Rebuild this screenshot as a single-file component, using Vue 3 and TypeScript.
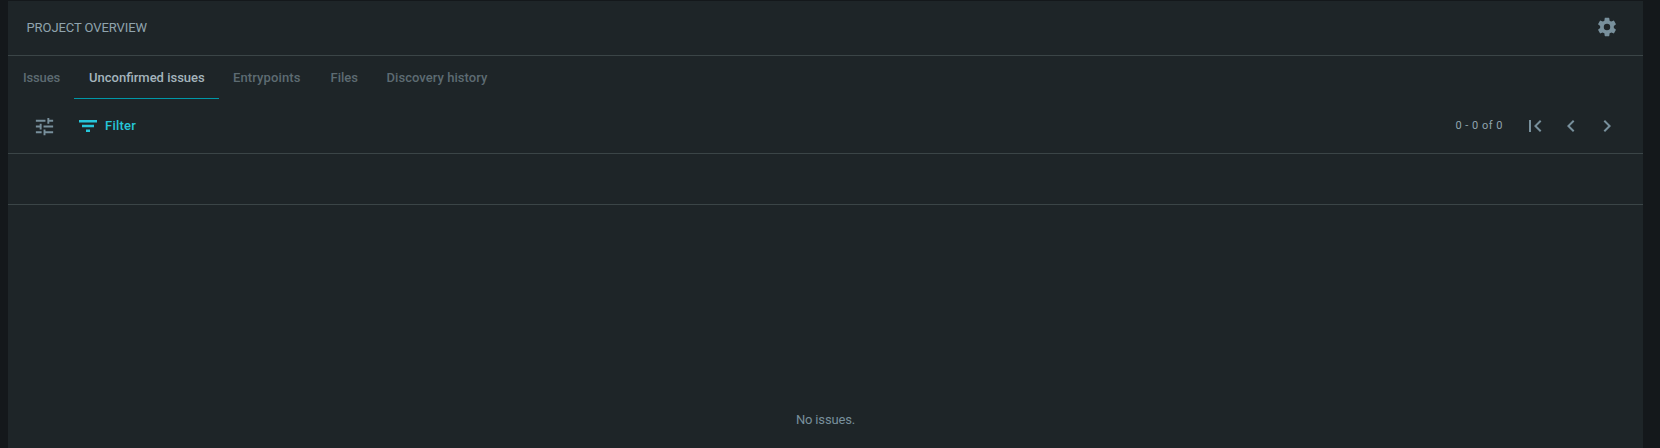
<script setup lang="ts">
import { ref } from "vue";

interface Tab {
  id: string;
  label: string;
}

const tabs: Tab[] = [
  { id: "issues", label: "Issues" },
  { id: "unconfirmed", label: "Unconfirmed issues" },
  { id: "entrypoints", label: "Entrypoints" },
  { id: "files", label: "Files" },
  { id: "history", label: "Discovery history" },
];

const activeTab = ref("unconfirmed");
</script>

<template>
  <div class="page">
    <section class="panel">
      <header class="panel__header">
        <span class="panel__title">PROJECT OVERVIEW</span>
        <button class="icon-button" aria-label="Settings">
          <svg class="icon icon--settings" viewBox="0 0 24 24">
            <path d="M12 15.5A3.5 3.5 0 0 1 8.5 12 3.5 3.5 0 0 1 12 8.5a3.5 3.5 0 0 1 3.5 3.5 3.5 3.5 0 0 1-3.5 3.5m7.43-2.53c.04-.32.07-.64.07-.97s-.03-.66-.07-1l2.11-1.63c.19-.15.24-.42.12-.64l-2-3.46c-.12-.22-.39-.31-.61-.22l-2.49 1c-.52-.39-1.06-.73-1.69-.98l-.37-2.65A.506.506 0 0 0 14 2h-4c-.25 0-.46.18-.5.42l-.37 2.65c-.63.25-1.17.59-1.69.98l-2.49-1c-.22-.09-.49 0-.61.22l-2 3.46c-.13.22-.07.49.12.64L4.57 11c-.04.34-.07.67-.07 1s.03.65.07.97l-2.11 1.66c-.19.15-.25.42-.12.64l2 3.46c.12.22.39.3.61.22l2.49-1.01c.52.4 1.06.74 1.69.99l.37 2.65c.04.24.25.42.5.42h4c.25 0 .46-.18.5-.42l.37-2.65c.63-.26 1.17-.59 1.69-.99l2.49 1.01c.22.08.49 0 .61-.22l2-3.46c.12-.22.07-.49-.12-.64l-2.11-1.66Z" />
          </svg>
        </button>
      </header>

      <nav class="tabs">
        <button v-for="tab in tabs" :key="tab.id" class="tab" :class="[`tab--${tab.id}`, { 'tab--active': tab.id === activeTab }]" @click="activeTab = tab.id">
          {{ tab.label }}
        </button>
      </nav>

      <div class="toolbar">
        <button class="icon-button" aria-label="Columns">
          <svg class="icon icon--tune" viewBox="0 0 24 24">
            <path d="M3 17v2h6v-2H3zM3 5v2h10V5H3zm10 16v-2h8v-2h-8v-2h-2v6h2zM7 9v2H3v2h4v2h2V9H7zm14 4v-2H11v2h10zm-6-4h2V7h4V5h-4V3h-2v6z" />
          </svg>
        </button>
        <button class="filter">
          <svg class="icon" viewBox="0 0 24 24">
            <path d="M10 18h4v-2.5h-4v2.5zM3 6v2.5h18V6H3zm3 7.2h12v-2.4H6v2.4z" />
          </svg>
          <span class="filter__label">Filter</span>
        </button>

        <div class="pager">
          <span class="pager__range">0 - 0 of 0</span>
          <button class="icon-button" aria-label="First page">
            <svg class="icon" viewBox="0 0 24 24">
              <path d="M18.41 16.59L13.82 12l4.59-4.59L17 6l-6 6 6 6zM6 6h2v12H6z" />
            </svg>
          </button>
          <button class="icon-button" aria-label="Previous page">
            <svg class="icon" viewBox="0 0 24 24">
              <path d="M15.41 7.41L14 6l-6 6 6 6 1.41-1.41L10.83 12z" />
            </svg>
          </button>
          <button class="icon-button" aria-label="Next page">
            <svg class="icon" viewBox="0 0 24 24">
              <path d="M10 6L8.59 7.41 13.17 12l-4.58 4.59L10 18l6-6z" />
            </svg>
          </button>
        </div>
      </div>

      <div class="table-head"></div>
      <div class="empty"><span class="empty__text">No issues.</span></div>
    </section>
  </div>
</template>

<style>
body {
  background: #14181b;
  overflow: hidden;
}
</style>

<style scoped>
.page {
  box-sizing: border-box;
  height: 448px;
  padding: 1px 17px 0 8px;
  background: #14181b;
  color: #90a4ae;
  font-family: Roboto, "Noto Sans", sans-serif;
  font-size: 13px;
}

.panel {
  display: flex;
  flex-direction: column;
  height: 447px;
  background: #1e2528;
}

button {
  padding: 0;
  border: 0;
  background: none;
  color: inherit;
  font: inherit;
  cursor: pointer;
}

.panel__header {
  display: flex;
  align-items: center;
  justify-content: space-between;
  box-sizing: border-box;
  height: 55px;
  padding: 0 18px 2px 18.5px;
  border-bottom: 1px solid #3b4547;
}

.panel__title {
  letter-spacing: -0.08px;
}

.icon-button {
  display: flex;
  align-items: center;
  justify-content: center;
  width: 36px;
  height: 36px;
  color: #78909c;
}

.icon {
  display: block;
  width: 24px;
  height: 24px;
  fill: currentColor;
}

.icon--settings {
  width: 22px;
  height: 22px;
}

.icon--tune {
  width: 23px;
  height: 23px;
}

.tabs {
  display: flex;
  height: 43px;
}

.tab {
  box-sizing: border-box;
  padding: 1px 0 0 15px;
  border-bottom: 1px solid transparent;
  color: #5d6b72;
  font-weight: 500;
  text-align: left;
  white-space: nowrap;
}

.tab--active {
  border-bottom-color: #0097a7;
  color: #a4b4bc;
}

.tab--issues {
  width: 66px;
  letter-spacing: -0.15px;
}

.tab--unconfirmed {
  width: 145px;
}

.tab--entrypoints {
  width: 97px;
  padding-left: 14px;
  letter-spacing: 0.12px;
}

.tab--files {
  width: 56px;
  padding-left: 14.5px;
}

.tab--history {
  width: 131px;
  padding-left: 14.5px;
  letter-spacing: 0.05px;
}

.toolbar {
  display: flex;
  align-items: center;
  box-sizing: border-box;
  height: 55px;
  padding: 0 18px;
  border-bottom: 1px solid #3b4547;
}

.filter {
  display: flex;
  align-items: center;
  gap: 5px;
  margin-left: 14px;
  color: #26c6da;
  font-weight: 500;
}

.filter__label {
  padding-bottom: 1px;
  letter-spacing: 0.25px;
}

.pager {
  display: flex;
  align-items: center;
  margin-left: auto;
}

.pager__range {
  margin-right: 14px;
  padding-bottom: 1px;
  font-size: 11px;
  letter-spacing: 0.5px;
}

.table-head {
  box-sizing: border-box;
  height: 51px;
  border-bottom: 1px solid #3b4547;
}

.empty {
  padding-top: 207px;
  color: #78909c;
  text-align: center;
}

.empty__text {
  letter-spacing: -0.15px;
}
</style>
